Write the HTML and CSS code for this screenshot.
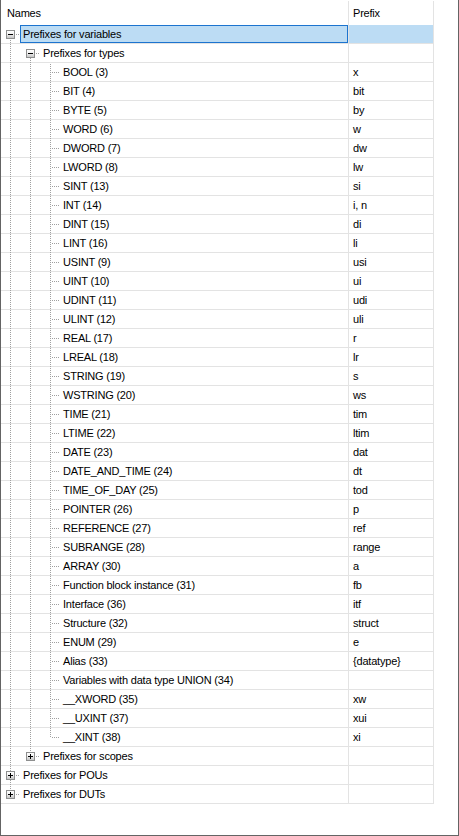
FILE: index.html
```html
<!DOCTYPE html>
<html lang="en">

<head>
    <meta charset="UTF-8">
    <meta name="viewport" content="width=device-width, initial-scale=1.0">
    <title>Prefixes</title>
    <link rel="stylesheet" href="styles.css">
</head>

<body>
    <div class="frame">
        <div class="head">
            <div class="col-name">Names</div>
            <div class="col-prefix">Prefix</div>
        </div>

        <div class="row sel">
            <div class="name"><span class="g box first"><b class="exp"></b></span><span class="label">Prefixes for variables</span></div>
            <div class="prefix"></div>
        </div>
        <div class="row">
            <div class="name"><span class="g pipe"></span><span class="g box first"><b class="exp"></b></span><span class="label">Prefixes for types</span></div>
            <div class="prefix"></div>
        </div>

        <!-- data types -->
        <div class="row"><div class="name"><span class="g pipe"></span><span class="g pipe"></span><span class="g tee"></span><span class="label">BOOL (3)</span></div><div class="prefix">x</div></div>
        <div class="row"><div class="name"><span class="g pipe"></span><span class="g pipe"></span><span class="g tee"></span><span class="label">BIT (4)</span></div><div class="prefix">bit</div></div>
        <div class="row"><div class="name"><span class="g pipe"></span><span class="g pipe"></span><span class="g tee"></span><span class="label">BYTE (5)</span></div><div class="prefix">by</div></div>
        <div class="row"><div class="name"><span class="g pipe"></span><span class="g pipe"></span><span class="g tee"></span><span class="label">WORD (6)</span></div><div class="prefix">w</div></div>
        <div class="row"><div class="name"><span class="g pipe"></span><span class="g pipe"></span><span class="g tee"></span><span class="label">DWORD (7)</span></div><div class="prefix">dw</div></div>
        <div class="row"><div class="name"><span class="g pipe"></span><span class="g pipe"></span><span class="g tee"></span><span class="label">LWORD (8)</span></div><div class="prefix">lw</div></div>
        <div class="row"><div class="name"><span class="g pipe"></span><span class="g pipe"></span><span class="g tee"></span><span class="label">SINT (13)</span></div><div class="prefix">si</div></div>
        <div class="row"><div class="name"><span class="g pipe"></span><span class="g pipe"></span><span class="g tee"></span><span class="label">INT (14)</span></div><div class="prefix">i, n</div></div>
        <div class="row"><div class="name"><span class="g pipe"></span><span class="g pipe"></span><span class="g tee"></span><span class="label">DINT (15)</span></div><div class="prefix">di</div></div>
        <div class="row"><div class="name"><span class="g pipe"></span><span class="g pipe"></span><span class="g tee"></span><span class="label">LINT (16)</span></div><div class="prefix">li</div></div>
        <div class="row"><div class="name"><span class="g pipe"></span><span class="g pipe"></span><span class="g tee"></span><span class="label">USINT (9)</span></div><div class="prefix">usi</div></div>
        <div class="row"><div class="name"><span class="g pipe"></span><span class="g pipe"></span><span class="g tee"></span><span class="label">UINT (10)</span></div><div class="prefix">ui</div></div>
        <div class="row"><div class="name"><span class="g pipe"></span><span class="g pipe"></span><span class="g tee"></span><span class="label">UDINT (11)</span></div><div class="prefix">udi</div></div>
        <div class="row"><div class="name"><span class="g pipe"></span><span class="g pipe"></span><span class="g tee"></span><span class="label">ULINT (12)</span></div><div class="prefix">uli</div></div>
        <div class="row"><div class="name"><span class="g pipe"></span><span class="g pipe"></span><span class="g tee"></span><span class="label">REAL (17)</span></div><div class="prefix">r</div></div>
        <div class="row"><div class="name"><span class="g pipe"></span><span class="g pipe"></span><span class="g tee"></span><span class="label">LREAL (18)</span></div><div class="prefix">lr</div></div>
        <div class="row"><div class="name"><span class="g pipe"></span><span class="g pipe"></span><span class="g tee"></span><span class="label">STRING (19)</span></div><div class="prefix">s</div></div>
        <div class="row"><div class="name"><span class="g pipe"></span><span class="g pipe"></span><span class="g tee"></span><span class="label">WSTRING (20)</span></div><div class="prefix">ws</div></div>
        <div class="row"><div class="name"><span class="g pipe"></span><span class="g pipe"></span><span class="g tee"></span><span class="label">TIME (21)</span></div><div class="prefix">tim</div></div>
        <div class="row"><div class="name"><span class="g pipe"></span><span class="g pipe"></span><span class="g tee"></span><span class="label">LTIME (22)</span></div><div class="prefix">ltim</div></div>
        <div class="row"><div class="name"><span class="g pipe"></span><span class="g pipe"></span><span class="g tee"></span><span class="label">DATE (23)</span></div><div class="prefix">dat</div></div>
        <div class="row"><div class="name"><span class="g pipe"></span><span class="g pipe"></span><span class="g tee"></span><span class="label">DATE_AND_TIME (24)</span></div><div class="prefix">dt</div></div>
        <div class="row"><div class="name"><span class="g pipe"></span><span class="g pipe"></span><span class="g tee"></span><span class="label">TIME_OF_DAY (25)</span></div><div class="prefix">tod</div></div>
        <div class="row"><div class="name"><span class="g pipe"></span><span class="g pipe"></span><span class="g tee"></span><span class="label">POINTER (26)</span></div><div class="prefix">p</div></div>
        <div class="row"><div class="name"><span class="g pipe"></span><span class="g pipe"></span><span class="g tee"></span><span class="label">REFERENCE (27)</span></div><div class="prefix">ref</div></div>
        <div class="row"><div class="name"><span class="g pipe"></span><span class="g pipe"></span><span class="g tee"></span><span class="label">SUBRANGE (28)</span></div><div class="prefix">range</div></div>
        <div class="row"><div class="name"><span class="g pipe"></span><span class="g pipe"></span><span class="g tee"></span><span class="label">ARRAY (30)</span></div><div class="prefix">a</div></div>
        <div class="row"><div class="name"><span class="g pipe"></span><span class="g pipe"></span><span class="g tee"></span><span class="label">Function block instance (31)</span></div><div class="prefix">fb</div></div>
        <div class="row"><div class="name"><span class="g pipe"></span><span class="g pipe"></span><span class="g tee"></span><span class="label">Interface (36)</span></div><div class="prefix">itf</div></div>
        <div class="row"><div class="name"><span class="g pipe"></span><span class="g pipe"></span><span class="g tee"></span><span class="label">Structure (32)</span></div><div class="prefix">struct</div></div>
        <div class="row"><div class="name"><span class="g pipe"></span><span class="g pipe"></span><span class="g tee"></span><span class="label">ENUM (29)</span></div><div class="prefix">e</div></div>
        <div class="row"><div class="name"><span class="g pipe"></span><span class="g pipe"></span><span class="g tee"></span><span class="label">Alias (33)</span></div><div class="prefix">{datatype}</div></div>
        <div class="row"><div class="name"><span class="g pipe"></span><span class="g pipe"></span><span class="g tee"></span><span class="label">Variables with data type UNION (34)</span></div><div class="prefix"></div></div>
        <div class="row"><div class="name"><span class="g pipe"></span><span class="g pipe"></span><span class="g tee"></span><span class="label">__XWORD (35)</span></div><div class="prefix">xw</div></div>
        <div class="row"><div class="name"><span class="g pipe"></span><span class="g pipe"></span><span class="g tee"></span><span class="label">__UXINT (37)</span></div><div class="prefix">xui</div></div>
        <div class="row"><div class="name"><span class="g pipe"></span><span class="g pipe"></span><span class="g end"></span><span class="label">__XINT (38)</span></div><div class="prefix">xi</div></div>

        <div class="row">
            <div class="name"><span class="g pipe"></span><span class="g box last"><b class="exp plus"></b></span><span class="label">Prefixes for scopes</span></div>
            <div class="prefix"></div>
        </div>
        <div class="row">
            <div class="name"><span class="g box mid"><b class="exp plus"></b></span><span class="label">Prefixes for POUs</span></div>
            <div class="prefix"></div>
        </div>
        <div class="row">
            <div class="name"><span class="g box last"><b class="exp plus"></b></span><span class="label">Prefixes for DUTs</span></div>
            <div class="prefix"></div>
        </div>
    </div>
</body>

</html>
```

FILE: styles.css
```css
body {
    margin: 0;
    background: #fff;
    color: #000;
    font-family: "Liberation Sans", Arial, sans-serif;
    font-size: 11px;
    letter-spacing: -0.2px;
}

.frame {
    position: relative;
    width: 459px;
    height: 836px;
    box-sizing: border-box;
    overflow: hidden;
    border-right: 1px solid #646464;
    border-bottom: 1px solid #646464;
}

/* left window edge sits over the grid lines */
.frame::before {
    content: "";
    position: absolute;
    left: 0;
    top: 0;
    bottom: 0;
    width: 1px;
    background: #646464;
    z-index: 2;
}

.head,
.row {
    display: flex;
    width: 434px;
}

.head {
    height: 25px;
    padding-top: 1px;
    line-height: 24px;
    box-sizing: border-box;
}

.col-name,
.name {
    width: 349px;
    border-right: 1px solid #e3e3e3;
    box-sizing: border-box;
}

.col-prefix,
.prefix {
    width: 85px;
    padding-left: 4px;
    border-right: 1px solid #e3e3e3;
    box-sizing: border-box;
    white-space: nowrap;
}

.col-name {
    padding-left: 7px;
}

.row {
    height: 19px;
    border-bottom: 1px solid #e3e3e3;
    box-sizing: border-box;
}

.name {
    display: flex;
}

.prefix {
    line-height: 18px;
}

.label {
    flex: 1;
    padding-left: 2px;
    border: 1px solid transparent;
    line-height: 16px;
    white-space: nowrap;
}

.sel .label {
    background: #bcdcf4;
    border-color: #1c74cf;
}

.sel .prefix {
    background: #bcdcf4;
}

/* tree guides: one 20px slot per level */
.g {
    position: relative;
    flex: none;
    width: 20px;
    height: 18px;
}

.g::before {
    content: "";
    position: absolute;
    left: 10px;
    top: 0;
    bottom: -1px;
    width: 1px;
    background: linear-gradient(#a0a0a0 50%, transparent 0) 0 0 / 1px 2px repeat fixed;
}

.end::before {
    bottom: auto;
    height: 10px;
}

.box.first::before {
    top: 14px;
}

.box.last::before {
    bottom: auto;
    height: 5px;
}

.tee::after,
.end::after,
.box::after {
    content: "";
    position: absolute;
    top: 9px;
    left: 11px;
    width: 9px;
    height: 1px;
    background: linear-gradient(90deg, #a0a0a0 50%, transparent 0) 0 0 / 2px 1px repeat fixed;
}

.box::after {
    left: 15px;
    width: 5px;
}

.exp {
    position: absolute;
    left: 6px;
    top: 5px;
    width: 9px;
    height: 9px;
    box-sizing: border-box;
    border: 1px solid #8e8f8f;
    background:
        linear-gradient(#000, #000) center / 5px 1px no-repeat,
        linear-gradient(#fff, #f2f2f2 40%, #c6c6c6);
}

.exp.plus {
    background:
        linear-gradient(#000, #000) center / 5px 1px no-repeat,
        linear-gradient(#000, #000) center / 1px 5px no-repeat,
        linear-gradient(#fff, #f2f2f2 40%, #c6c6c6);
}
```
